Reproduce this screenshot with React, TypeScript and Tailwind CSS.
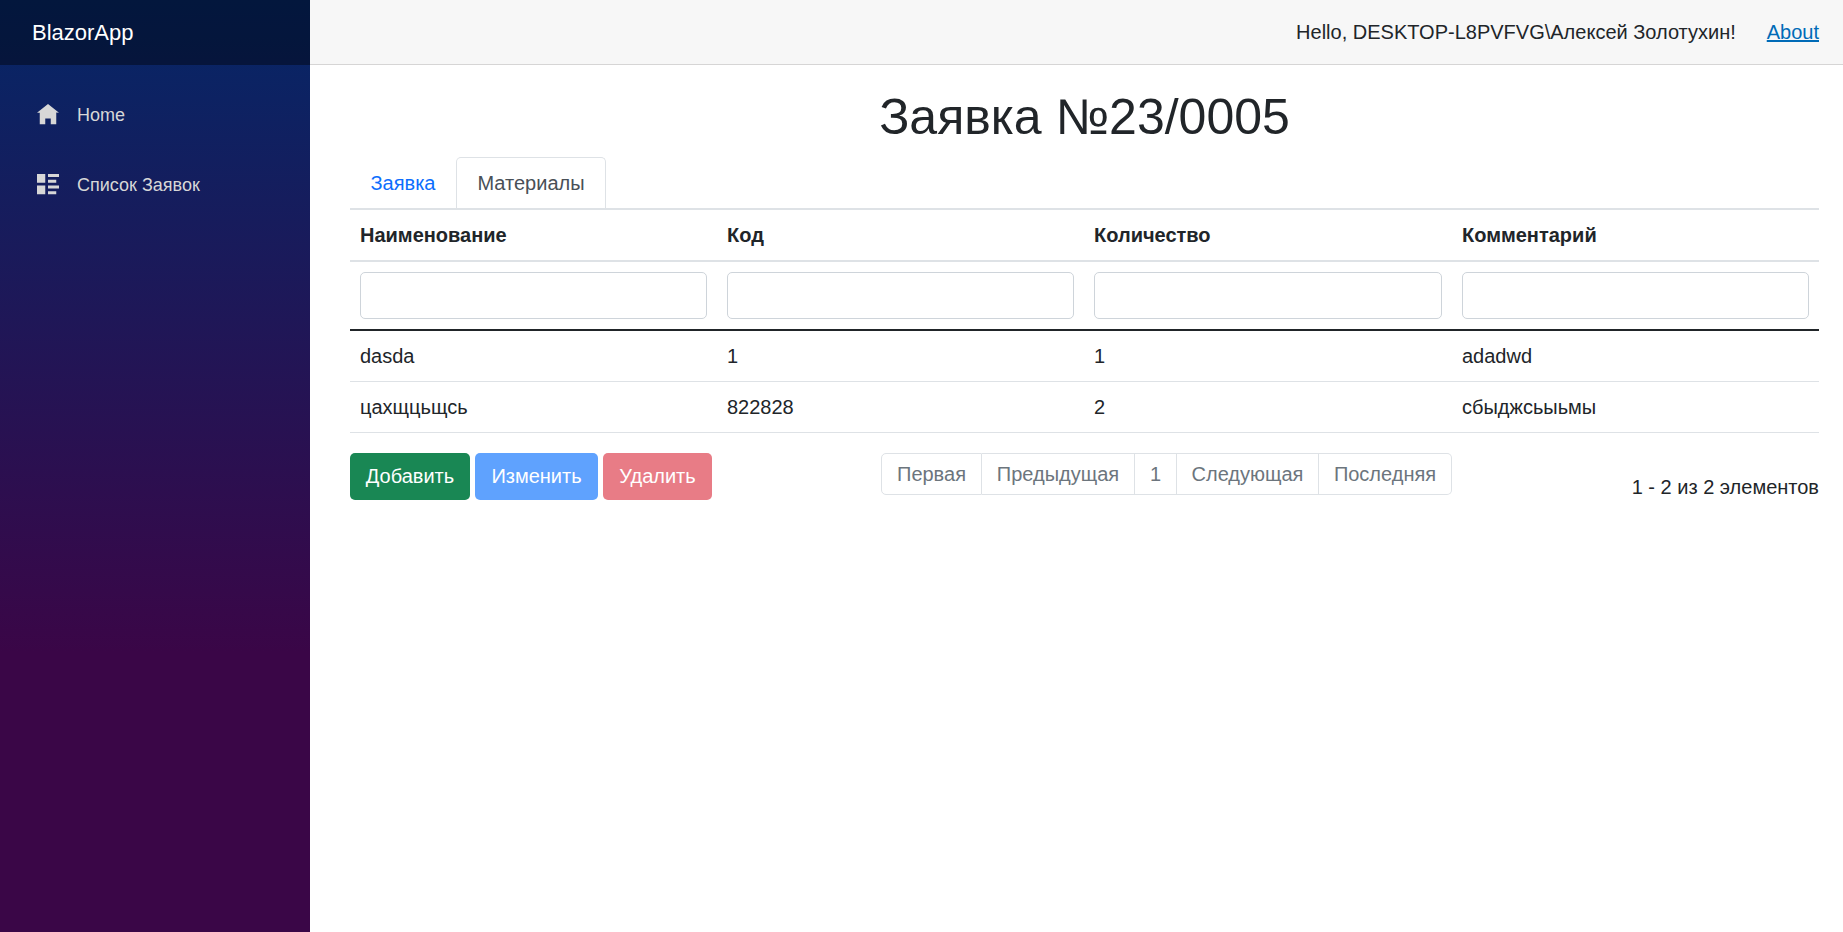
const columns = ['Наименование', 'Код', 'Количество', 'Комментарий'];
const columnWidths = ['w-[367px]', 'w-[367px]', 'w-[368px]', ''];

const rows = [
  ['dasda', '1', '1', 'adadwd'],
  ['цахщцьщсь', '822828', '2', 'сбыджсьыьмы'],
];

const pages = [
  { label: 'Первая', width: 'w-[101px] rounded-l-[5px]' },
  { label: 'Предыдущая', width: 'w-[153px] border-l-0' },
  { label: '1', width: 'w-[42px] border-l-0' },
  { label: 'Следующая', width: 'w-[142px] border-l-0' },
  { label: 'Последняя', width: 'w-[133px] border-l-0 rounded-r-[5px]' },
];

function HomeIcon() {
  return (
    <svg viewBox="0 0 8 8" preserveAspectRatio="none" className="mt-px h-[23px] w-[22px] fill-[#d7d7d7]">
      <path d="M4 0l-4 3h1v4h2v-2h2v2h2v-4.03l1 .03-4-3z" />
    </svg>
  );
}

function ListIcon() {
  return (
    <svg viewBox="0 0 8 8" preserveAspectRatio="none" className="mt-px h-[23px] w-[22px] fill-[#d7d7d7]">
      <path d="M0 0v3h3v-3h-3zm4 0v1h4v-1h-4zm0 2v1h3v-1h-3zm-4 2v3h3v-3h-3zm4 0v1h4v-1h-4zm0 2v1h3v-1h-3z" />
    </svg>
  );
}

function Sidebar() {
  return (
    <aside className="w-[310px] shrink-0 bg-[linear-gradient(180deg,#052767_0%,#3a0647_70%)]">
      <div className="flex h-[65px] items-center bg-black/40 pl-8 text-[22px] text-white">BlazorApp</div>
      <nav className="flex flex-col gap-[22px] pt-[26px] text-[18px] text-[#d7d7d7]">
        <a className="flex h-12 items-center gap-[18px] pl-[37px]">
          <HomeIcon />
          Home
        </a>
        <a className="flex h-12 items-center gap-[18px] pl-[37px]">
          <ListIcon />
          Список Заявок
        </a>
      </nav>
    </aside>
  );
}

function MaterialsTable() {
  return (
    <table className="w-full table-fixed border-collapse">
      <thead>
        <tr className="border-b-2 border-[#dee2e6]">
          {columns.map((c, i) => (
            <th key={c} className={`h-[51px] px-[10px] text-left font-bold ${columnWidths[i]}`}>{c}</th>
          ))}
        </tr>
        <tr className="border-b-2 border-[#212529]">
          {columns.map((c) => (
            <th key={c} className="h-[69px] px-[10px] py-0 align-middle font-normal">
              <input className="block h-[47px] w-full rounded-[5px] border border-[#ced4da] bg-white" />
            </th>
          ))}
        </tr>
      </thead>
      <tbody>
        {rows.map((row) => (
          <tr key={row[0]} className="border-b border-[#dee2e6]">
            {row.map((cell, i) => (
              <td key={i} className="h-[51px] px-[10px]">{cell}</td>
            ))}
          </tr>
        ))}
      </tbody>
    </table>
  );
}

export default function App() {
  return (
    <div className="flex min-h-screen bg-white font-['Liberation_Sans',Arial,sans-serif] text-[20px] leading-[30px] text-[#212529]">
      <Sidebar />
      <div className="min-w-0 flex-1">
        <header className="flex h-[65px] items-center justify-end gap-[31px] border-b border-[#d6d5d5] bg-[#f7f7f7] pr-6">
          <span>Hello, DESKTOP-L8PVFVG\Алексей Золотухин!</span>
          <a className="text-[#006bb7] underline">About</a>
        </header>
        <main className="pl-10 pr-6">
          <h1 className="pt-[22px] pb-[10px] text-center text-[50px] leading-[60px]">Заявка №23/0005</h1>
          <div className="flex h-[53px] items-start border-b-2 border-[#dee2e6]">
            <a className="flex h-[51px] w-[106px] items-center justify-center text-[#0d6efd]">Заявка</a>
            <a className="flex h-[51px] w-[150px] items-center justify-center rounded-t-[5px] border border-b-0 border-[#dee2e6] bg-white text-[#495057]">
              Материалы
            </a>
          </div>
          <MaterialsTable />
          <div className="mt-5 flex items-start">
            <div className="flex gap-[5px]">
              <button className="h-[47px] w-[120px] rounded-[5px] bg-[#198754] text-white">Добавить</button>
              <button className="h-[47px] w-[123px] rounded-[5px] bg-[#5fa2fe] text-white">Изменить</button>
              <button className="h-[47px] w-[109px] rounded-[5px] bg-[#e87c86] text-white">Удалить</button>
            </div>
            <div className="ml-[169px] flex">
              {pages.map((p) => (
                <span
                  key={p.label}
                  className={`flex h-[42px] items-center justify-center border border-[#dee2e6] text-[#6c757d] ${p.width}`}
                >
                  {p.label}
                </span>
              ))}
            </div>
            <span className="ml-auto pt-[19px]">1 - 2 из 2 элементов</span>
          </div>
        </main>
      </div>
    </div>
  );
}
